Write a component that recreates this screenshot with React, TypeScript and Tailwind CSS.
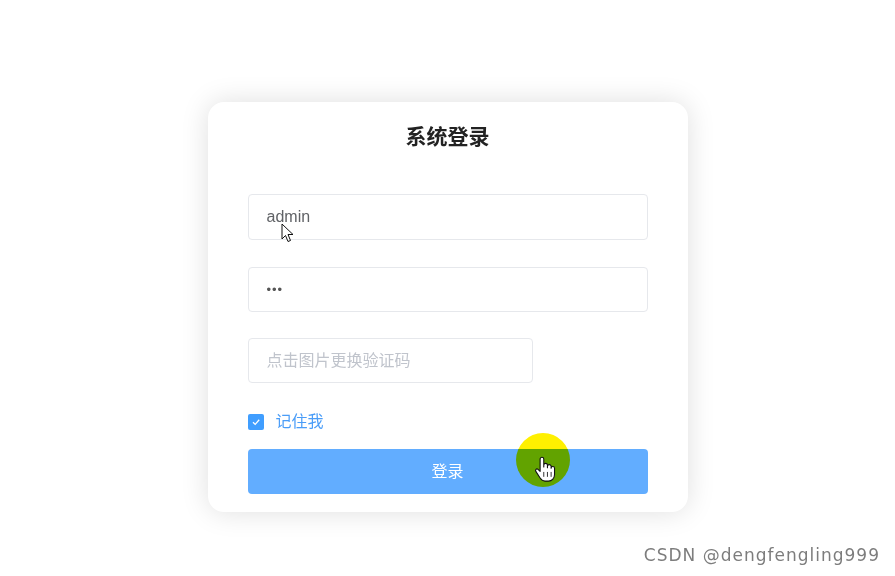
// App.tsx — 系统登录 login card

const sans = 'font-["Liberation_Sans","Noto_Sans_CJK_SC",sans-serif]';

// 鼠标箭头
function ArrowCursor() {
  return (
    <svg width="14" height="20" viewBox="0 0 14 20" className="absolute left-[281px] top-[223px]">
      <path d="M1 1 L1 16 L4.5 12.5 L7 18.5 L9.5 17.5 L7 11.5 L12 11.5 Z" fill="#fff" stroke="#111" strokeWidth="1" strokeLinejoin="round" />
    </svg>
  );
}

// 手形光标
function HandCursor() {
  return (
    <svg width="22" height="27" viewBox="0 0 18 22" className="absolute left-[534px] top-[456px]">
      <path
        d="M5 2.5 a1.5 1.5 0 0 1 3 0 V9 V7.5 a1.5 1.5 0 0 1 3 0 V9.5 V8.5 a1.5 1.5 0 0 1 3 0 V10 a1.4 1.4 0 0 1 2.8 0 V15 c0 3 -2 5.5 -5 5.5 H9 c-2 0 -3 -1 -4 -2.5 L1.5 12.5 c-0.8 -1.2 0.6 -2.6 1.8 -1.6 L5 12.5 Z"
        fill="#fff"
        stroke="#111"
        strokeWidth="0.9"
        strokeLinejoin="round"
      />
      <path d="M8 13 V17 M11 13 V17 M14 13 V17" stroke="#111" strokeWidth="0.7" />
    </svg>
  );
}

export default function App() {
  return (
    <div className={`relative h-[576px] w-[895px] overflow-hidden bg-white ${sans}`}>
      <div className="flex justify-center pt-[102px]">
        <div className="flex h-[410px] w-[480px] flex-col rounded-[16px] bg-white px-[40px] pt-[21px] shadow-[0_0_28px_rgba(0,0,0,0.13)]">
          <h1 className="text-center text-[21px] leading-[28px] font-bold text-[#222]">系统登录</h1>

          <input
            type="text"
            defaultValue="admin"
            className="mt-[43px] h-[46px] w-full rounded-[4px] border border-[#e6e8ec] px-[18px] text-[16px] text-[#606266] outline-none"
          />
          <input
            type="password"
            defaultValue="123"
            className="mt-[27px] h-[45px] w-full rounded-[4px] border border-[#e6e8ec] px-[18px] text-[13px] tracking-[1px] text-[#555] outline-none"
          />
          <input
            type="text"
            placeholder="点击图片更换验证码"
            className="mt-[26px] h-[45px] w-[285px] rounded-[4px] border border-[#e6e8ec] px-[18px] text-[16px] text-[#606266] outline-none placeholder:text-[#c0c4cc]"
          />

          <label className="mt-[27px] flex h-[24px] items-center gap-[12px]">
            <span className="flex h-[16px] w-[16px] items-center justify-center rounded-[2px] bg-[#409eff]">
              <svg width="10" height="10" viewBox="0 0 10 10">
                <path d="M2 5.2 L4.2 7.4 L8.2 2.8" fill="none" stroke="#fff" strokeWidth="1.3" />
              </svg>
            </span>
            <span className="text-[16px] text-[#4a9df8]">记住我</span>
          </label>

          <button className="mt-[15px] h-[45px] w-full rounded-[4px] bg-[#62adff] text-[16px] text-white">登录</button>
        </div>
      </div>

      {/* 点击高亮 */}
      <div className="absolute left-[516px] top-[433px] h-[54px] w-[54px] rounded-full bg-[#fff000] mix-blend-multiply" />
      <ArrowCursor />
      <HandCursor />

      <div className='absolute right-[15px] top-[544px] font-["DejaVu_Sans",sans-serif] text-[17px] leading-[22px] tracking-[1px] text-[#7d7d7d]'>
        CSDN @dengfengling999
      </div>
    </div>
  );
}
